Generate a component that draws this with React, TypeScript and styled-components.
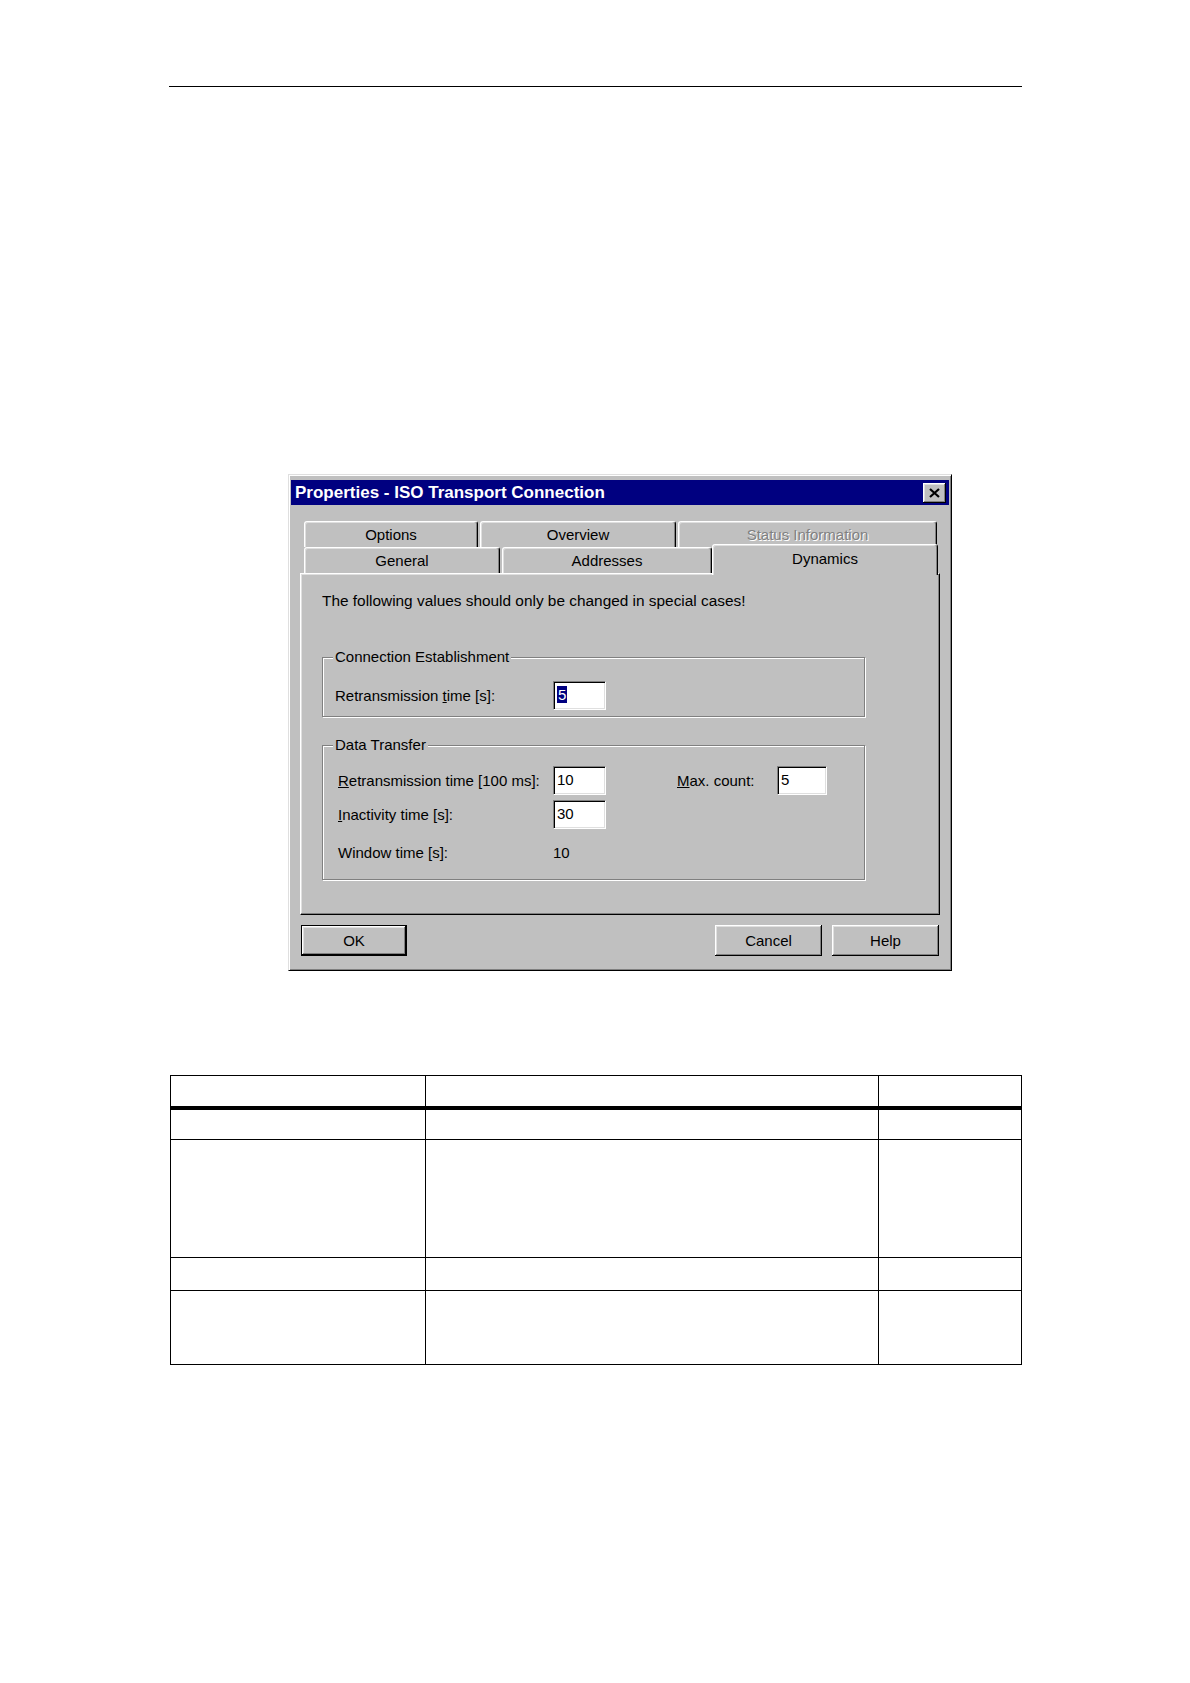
import React from 'react';
import styled, { createGlobalStyle } from 'styled-components';

const GlobalStyle = createGlobalStyle`
  body {
    margin: 0;
    background: #ffffff;
  }
`;

const gray = '#c0c0c0';

function App() {
  return (
    <>
      <GlobalStyle />
      <Page>
        <HeaderRule />
        <Dialog>
          <TitleBar>
            <Title>Properties - ISO Transport Connection</Title>
            <CloseButton>
              <svg width="11" height="10" viewBox="0 0 11 10">
                <path d="M1 1 L10 9 M10 1 L1 9" stroke="#000" strokeWidth="2.2" />
              </svg>
            </CloseButton>
          </TitleBar>
          <Body>
            <Tabs>
              <TabRow>
                <Tab width={174}>Options</Tab>
                <Tab width={196}>Overview</Tab>
                <Tab width={259} disabled>
                  Status Information
                </Tab>
              </TabRow>
              <TabRow>
                <Tab width={196}>General</Tab>
                <Tab width={210}>Addresses</Tab>
                <Tab width={226} selected>
                  Dynamics
                </Tab>
              </TabRow>
            </Tabs>
            <Panel>
              <Intro>The following values should only be changed in special cases!</Intro>
              <Group height={60} top={47} pad={12}>
                <Legend>Connection Establishment</Legend>
                <Row top={23}>
                  <Label width={218}>
                    Retransmission <u>t</u>ime [s]:
                  </Label>
                  <Field>
                    <Selected>5</Selected>
                  </Field>
                </Row>
              </Group>
              <Group height={135} top={28} pad={15}>
                <Legend>Data Transfer</Legend>
                <Row top={20}>
                  <Label width={215}>
                    <u>R</u>etransmission time [100 ms]:
                  </Label>
                  <Field>10</Field>
                  <Label width={100} style={{ marginLeft: 71 }}>
                    <u>M</u>ax. count:
                  </Label>
                  <Field narrow>5</Field>
                </Row>
                <Row top={5}>
                  <Label width={215}>
                    <u>I</u>nactivity time [s]:
                  </Label>
                  <Field>30</Field>
                </Row>
                <Row top={9}>
                  <Label width={215}>Window time [s]:</Label>
                  <Value>10</Value>
                </Row>
              </Group>
            </Panel>
            <ButtonBar>
              <Button primary>OK</Button>
              <Spacer />
              <Button>Cancel</Button>
              <Button>Help</Button>
            </ButtonBar>
          </Body>
        </Dialog>
        <Table>
          <colgroup>
            <col style={{ width: 255 }} />
            <col style={{ width: 453 }} />
            <col style={{ width: 143 }} />
          </colgroup>
          <tbody>
            <HeadRow>
              <Cell />
              <Cell />
              <Cell />
            </HeadRow>
            <TableRow h={32}>
              <Cell />
              <Cell />
              <Cell />
            </TableRow>
            <TableRow h={118}>
              <Cell />
              <Cell />
              <Cell />
            </TableRow>
            <TableRow h={33}>
              <Cell />
              <Cell />
              <Cell />
            </TableRow>
            <TableRow h={74}>
              <Cell />
              <Cell />
              <Cell />
            </TableRow>
          </tbody>
        </Table>
      </Page>
    </>
  );
}

export default App;

const Page = styled.div`
  width: 1190px;
  min-height: 1683px;
  overflow: hidden;
  font-family: 'Liberation Sans', Arial, sans-serif;
`;

const HeaderRule = styled.div`
  margin: 86px 0 0 169px;
  width: 853px;
  height: 1px;
  background: #000;
`;

const Dialog = styled.div`
  margin: 387px 0 0 288px;
  width: 664px;
  height: 497px;
  box-sizing: border-box;
  padding: 5px 2px 0 2px;
  background: ${gray};
  border: 1px solid;
  border-color: #dfdfdf #000 #000 #dfdfdf;
  box-shadow: inset 1px 1px 0 #fff, inset -1px -1px 0 #808080;
  color: #000;
`;

const TitleBar = styled.div`
  height: 25px;
  background: #000080;
  display: flex;
  align-items: center;
  justify-content: space-between;
  padding: 0 3px 0 4px;
`;

const Title = styled.span`
  color: #fff;
  font-weight: bold;
  font-size: 17px;
`;

const CloseButton = styled.div`
  width: 23px;
  height: 20px;
  box-sizing: border-box;
  background: ${gray};
  display: flex;
  align-items: center;
  justify-content: center;
  box-shadow: inset -1px -1px 0 #000, inset 1px 1px 0 #fff, inset -2px -2px 0 #808080,
    inset 2px 2px 0 #dfdfdf;
`;

const Body = styled.div`
  padding: 0 9px;
`;

const Tabs = styled.div`
  margin-top: 16px;
  padding-left: 4px;
`;

const TabRow = styled.div`
  display: flex;
  align-items: flex-end;
  gap: 2px;
  height: 26px;
`;

const Tab = styled.div<{ width: number; selected?: boolean; disabled?: boolean }>`
  position: relative;
  z-index: ${({ selected }) => (selected ? 2 : 1)};
  width: ${({ width }) => width}px;
  height: ${({ selected }) => (selected ? 31 : 26)}px;
  margin-left: ${({ selected }) => (selected ? -2 : 0)}px;
  margin-bottom: ${({ selected }) => (selected ? -2 : 0)}px;
  padding-bottom: ${({ selected }) => (selected ? 4 : 0)}px;
  box-sizing: border-box;
  background: ${gray};
  border: 1px solid;
  border-bottom: none;
  border-color: #fff #000 transparent #fff;
  border-radius: 3px 3px 0 0;
  box-shadow: inset -1px 0 0 #808080, inset 1px 1px 0 #dfdfdf;
  display: flex;
  align-items: center;
  justify-content: center;
  font-size: 15px;
  color: ${({ disabled }) => (disabled ? '#808080' : '#000')};
  text-shadow: ${({ disabled }) => (disabled ? '1px 1px 0 #fff' : 'none')};
`;

const Panel = styled.div`
  position: relative;
  height: 342px;
  box-sizing: border-box;
  padding: 0 0 0 21px;
  border: 1px solid;
  border-color: #fff #000 #000 #fff;
  box-shadow: inset -1px -1px 0 #808080, inset 1px 1px 0 #dfdfdf;
`;

const Intro = styled.div`
  margin-top: 18px;
  height: 18px;
  line-height: 18px;
  font-size: 15.4px;
`;

const Group = styled.div<{ height: number; top: number; pad: number }>`
  position: relative;
  margin-top: ${({ top }) => top}px;
  width: 543px;
  height: ${({ height }) => height}px;
  box-sizing: border-box;
  padding-left: ${({ pad }) => pad}px;
  border: 1px solid #808080;
  box-shadow: inset 1px 1px 0 #fff, 1px 1px 0 #fff;
`;

const Legend = styled.span`
  position: absolute;
  top: -10px;
  left: 10px;
  padding: 0 2px;
  background: ${gray};
  font-size: 15px;
  line-height: 18px;
`;

const Row = styled.div<{ top: number }>`
  display: flex;
  align-items: center;
  height: 29px;
  margin-top: ${({ top }) => top}px;
`;

const Label = styled.div<{ width: number }>`
  width: ${({ width }) => width}px;
  font-size: 15px;
  white-space: nowrap;
`;

const Field = styled.div<{ narrow?: boolean }>`
  width: ${({ narrow }) => (narrow ? 50 : 53)}px;
  height: 29px;
  box-sizing: border-box;
  padding: 2px 0 0 3px;
  background: #fff;
  border: 1px solid;
  border-color: #808080 #fff #fff #808080;
  box-shadow: inset 1px 1px 0 #000, inset -1px -1px 0 #dfdfdf;
  font-size: 15px;
  line-height: 22px;
`;

const Selected = styled.span`
  background: #000080;
  color: #fff;
  padding: 0 1px;
`;

const Value = styled.span`
  font-size: 15px;
`;

const ButtonBar = styled.div`
  display: flex;
  gap: 10px;
  margin: 10px 1px 0 1px;
`;

const Spacer = styled.div`
  flex: 1;
`;

const Button = styled.div<{ primary?: boolean }>`
  width: ${({ primary }) => (primary ? 106 : 107)}px;
  height: 31px;
  box-sizing: border-box;
  background: ${gray};
  display: flex;
  align-items: center;
  justify-content: center;
  font-size: 15px;
  border: ${({ primary }) => (primary ? '1px solid #000' : 'none')};
  box-shadow: inset -1px -1px 0 #000, inset 1px 1px 0 #fff, inset -2px -2px 0 #808080,
    inset 2px 2px 0 #dfdfdf;
`;

const Table = styled.table`
  margin: 104px 0 0 170px;
  width: 851px;
  border-collapse: collapse;
  table-layout: fixed;
`;

const TableRow = styled.tr<{ h: number }>`
  height: ${({ h }) => h}px;
`;

const HeadRow = styled.tr`
  height: 32px;
  border-bottom: 4px solid #000;
`;

const Cell = styled.td`
  border: 1px solid #000;
  padding: 0;
`;
